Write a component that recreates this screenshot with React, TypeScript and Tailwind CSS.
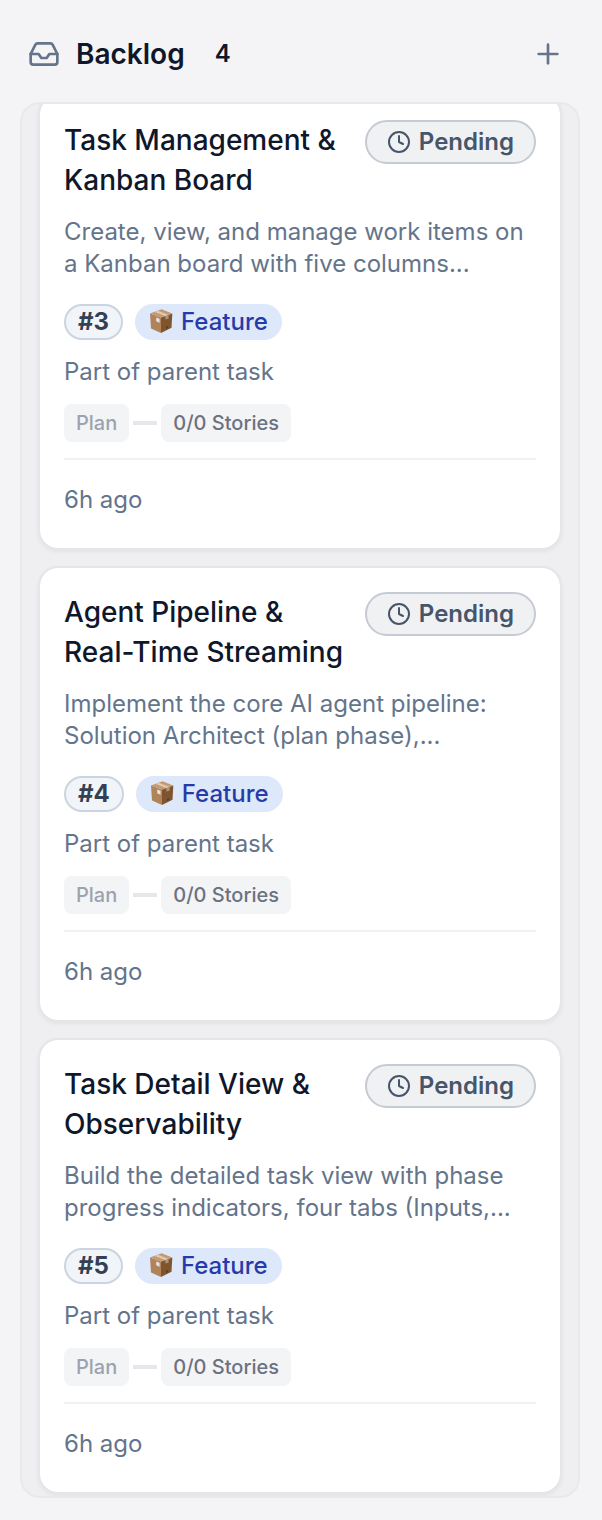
import { Clock, Inbox, Plus } from 'lucide-react';

interface Task {
  id: number;
  title: string[];
  description: string[];
}

const tasks: Task[] = [
  {
    id: 3,
    title: ['Task Management &', 'Kanban Board'],
    description: ['Create, view, and manage work items on', 'a Kanban board with five columns...'],
  },
  {
    id: 4,
    title: ['Agent Pipeline &', 'Real-Time Streaming'],
    description: ['Implement the core AI agent pipeline:', 'Solution Architect (plan phase),...'],
  },
  {
    id: 5,
    title: ['Task Detail View &', 'Observability'],
    description: ['Build the detailed task view with phase', 'progress indicators, four tabs (Inputs,...'],
  },
];

function PackageIcon() {
  return (
    <svg width="24" height="26" viewBox="0 0 24 26" className="-mt-0.5 shrink-0">
      <path d="M1 5.6 12 9.6V25L2 20.4Z" fill="#b0845a" />
      <path d="M12 9.6 23.3 5.6 22.5 19.8 12 25Z" fill="#7f5530" />
      <path d="M1 5.6 12.6 1.2 23.3 5.6 12 9.6Z" fill="#c39a70" />
      <path d="M5.6 3.9 8.8 2.7 19.6 6.9 16.4 8Z" fill="#e0cbb2" />
      <path d="M16.4 8 19.6 6.9V10.4L16.4 11.6Z" fill="#b39674" />
      <path d="M7.2 9.4 10.6 10.8V14.8L7.2 13.2Z" fill="#e8e3dc" />
      <path d="M17 19 19.2 18V20L17 21Z" fill="#5f3c20" />
    </svg>
  );
}

function TaskCard({ task }: { task: Task }) {
  return (
    <article className="shrink-0 rounded-[20px] border-2 border-[#e5e5ea] bg-white bg-clip-padding px-6 pt-6 pb-8 shadow-[0_2px_4px_rgba(0,0,0,0.05)]">
      <div className="flex items-start justify-between">
        <h3 className="text-[28px] leading-10 font-medium whitespace-nowrap text-[#0f172a]">
          {task.title.map((line) => (
            <span key={line} className="block">{line}</span>
          ))}
        </h3>
        {/* Zero-width wrapper so a long title can run under the badge */}
        <div className="flex w-0 justify-end">
          <span className="flex h-11 shrink-0 items-center gap-2 rounded-full border-2 border-[#c5cad4] bg-[#eff1f3] px-5 text-2xl font-semibold text-[#475569]">
            <Clock size={24} strokeWidth={2} />
            Pending
          </span>
        </div>
      </div>

      <p className="mt-4 text-2xl leading-8 whitespace-nowrap text-[#64748b]">
        {task.description.map((line) => (
          <span key={line} className="block">{line}</span>
        ))}
      </p>

      <div className="mt-6 flex items-center gap-3">
        <span className="flex h-9 items-center rounded-full border-2 border-[#cbd5e1] bg-[#f1f5f9] px-3 text-2xl font-bold text-[#334155]">
          #{task.id}
        </span>
        <span className="flex h-9 items-center gap-2 rounded-full bg-[#dde8fb] px-3.5 text-2xl font-medium text-[#263ba8]">
          <PackageIcon />
          Feature
        </span>
      </div>

      <p className="mt-4 text-2xl leading-8 text-[#64748b]">Part of parent task</p>

      <div className="mt-4 flex items-center gap-1 text-xl font-medium">
        <span className="flex h-[38px] items-center rounded-lg bg-[#f3f4f6] px-3 text-[#9ca3af]">Plan</span>
        <span className="h-1 w-6 bg-[#e5e7eb]" />
        <span className="flex h-[38px] items-center rounded-lg bg-[#f3f4f6] px-3 text-[#6b7280]">0/0 Stories</span>
      </div>

      <div className="mt-4 border-t-2 border-[#f2f2f4] pt-6 text-2xl leading-8 text-[#64748b]">6h ago</div>
    </article>
  );
}

export default function App() {
  return (
    <div className="flex h-[1520px] w-[602px] flex-col bg-[#f4f4f6] pr-[22px] pb-[22px] pl-5 font-['Inter',sans-serif]">
      <header className="flex h-[102px] shrink-0 items-center pt-1.5 pr-4 pl-2 text-[#0f172a]">
        <Inbox size={32} className="text-[#64748b]" />
        <h2 className="ml-4 text-[28px] leading-10 font-semibold">Backlog</h2>
        <span className="ml-[30px] text-2xl font-semibold">4</span>
        <Plus size={32} className="ml-auto text-[#64748b]" />
      </header>

      <section className="flex min-h-0 flex-1 flex-col overflow-hidden rounded-[20px] border-2 border-[#e9e9ec] bg-[#efeff1] px-4">
        <div className="-mt-2.5 flex flex-col gap-4">
          {tasks.map((task) => (
            <TaskCard key={task.id} task={task} />
          ))}
        </div>
      </section>
    </div>
  );
}
